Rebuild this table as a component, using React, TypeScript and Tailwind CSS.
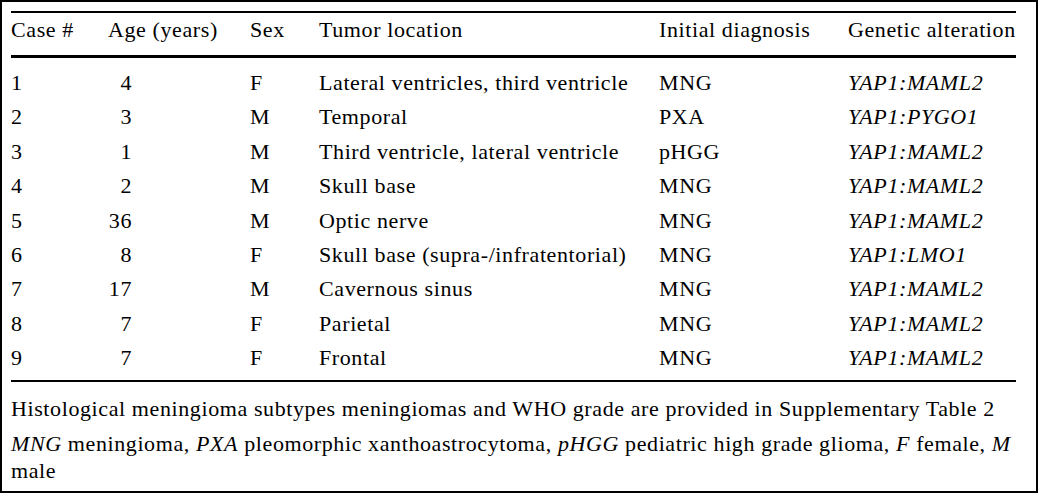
import React from "react";

const rows: [string, string, string, string, string, string][] = [
  ["1", "4", "F", "Lateral ventricles, third ventricle", "MNG", "YAP1:MAML2"],
  ["2", "3", "M", "Temporal", "PXA", "YAP1:PYGO1"],
  ["3", "1", "M", "Third ventricle, lateral ventricle", "pHGG", "YAP1:MAML2"],
  ["4", "2", "M", "Skull base", "MNG", "YAP1:MAML2"],
  ["5", "36", "M", "Optic nerve", "MNG", "YAP1:MAML2"],
  ["6", "8", "F", "Skull base (supra-/infratentorial)", "MNG", "YAP1:LMO1"],
  ["7", "17", "M", "Cavernous sinus", "MNG", "YAP1:MAML2"],
  ["8", "7", "F", "Parietal", "MNG", "YAP1:MAML2"],
  ["9", "7", "F", "Frontal", "MNG", "YAP1:MAML2"],
];

const grid = "grid grid-cols-[97px_142px_69px_340px_189px_1fr]";

export default function App() {
  return (
    <div
      className="w-[1038px] h-[493px] border-2 border-black bg-white text-black text-[22px] tracking-[0.6px] pl-[9px] pt-[9px]"
      style={{ fontFamily: '"Liberation Serif", "Times New Roman", serif' }}
    >
      <div className="w-[1005px]">
        <div className="h-[2px] bg-black" />
        <div className={`${grid} leading-[34px] pb-[8px] whitespace-nowrap`}>
          <div>Case #</div>
          <div>Age (years)</div>
          <div>Sex</div>
          <div>Tumor location</div>
          <div>Initial diagnosis</div>
          <div>Genetic alteration</div>
        </div>
        <div className="h-[3px] bg-black" />
        <div className="pt-[8px] pb-[4px]">
          {rows.map((r) => (
            <div key={r[0]} className={`${grid} leading-[34.4px] whitespace-nowrap`}>
              <div>{r[0]}</div>
              <div>
                <span className="inline-block w-[24px] text-right">{r[1]}</span>
              </div>
              <div>{r[2]}</div>
              <div>{r[3]}</div>
              <div>{r[4]}</div>
              <div className="italic">{r[5]}</div>
            </div>
          ))}
        </div>
        <div className="h-[2px] bg-black" />
        <div className="pt-[13px] leading-[27px]">
          <p className="whitespace-nowrap">
            Histological meningioma subtypes meningiomas and WHO grade are provided in Supplementary Table 2
          </p>
          <p className="mt-[8px] whitespace-nowrap">
            <i>MNG</i> meningioma, <i>PXA</i> pleomorphic xanthoastrocytoma, <i>pHGG</i> pediatric high grade
            glioma, <i>F</i> female, <i>M</i>
            <br />
            male
          </p>
        </div>
      </div>
    </div>
  );
}
